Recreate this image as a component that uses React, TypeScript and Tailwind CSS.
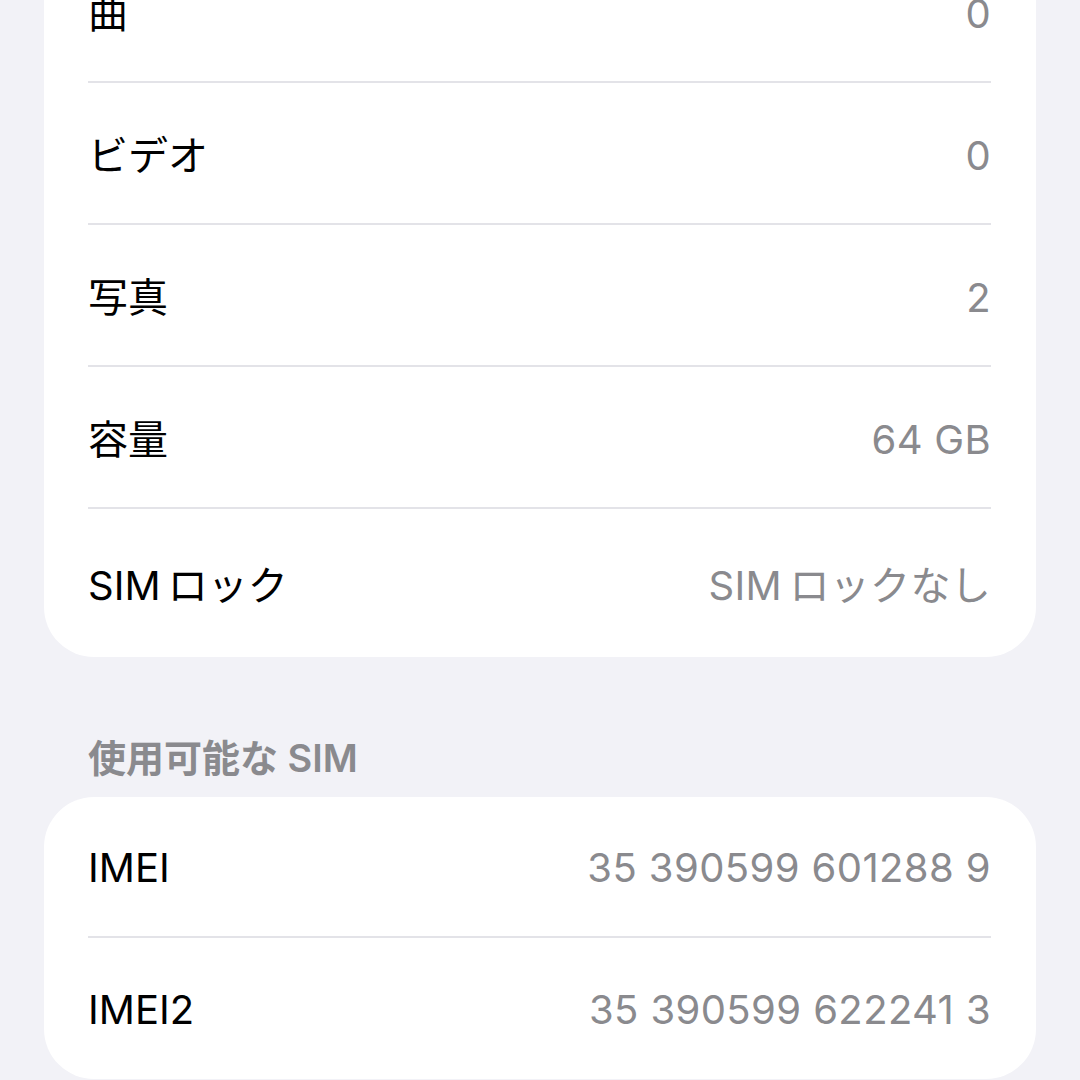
export default function App() {
  const rows1 = [
    { label: "曲", value: "0" },
    { label: "ビデオ", value: "0" },
    { label: "写真", value: "2" },
    { label: "容量", value: "64 GB" },
    { label: "SIM\u2009ロック", value: "SIM\u2009ロックなし" },
  ];
  const rows2 = [
    { label: "IMEI", value: "35 390599 601288 9" },
    { label: "IMEI2", value: "35 390599 622241 3" },
  ];

  return (
    <div
      className="w-[1080px] h-[1080px] overflow-hidden bg-[#f2f2f7] px-[44px]"
      style={{ fontFamily: 'Inter, "Noto Sans CJK JP", sans-serif' }}
    >
      <div className="-mt-[59px] bg-white rounded-b-[50px] pl-[44px]">
        {rows1.map((r, i) => (
          <div
            key={r.label}
            className={
              "flex items-center justify-between mr-[45px] pt-[5px] text-[40px] " +
              (i === rows1.length - 1 ? "h-[148px]" : "h-[142px] border-b-2 border-[#e3e3e8]")
            }
          >
            <span className="text-black">{r.label}</span>
            <span className="text-[#8a8a8e] tracking-[0.3px]">{r.value}</span>
          </div>
        ))}
      </div>

      <div className="pl-[44px] pt-[78px] pb-[16px] text-[38px] font-semibold text-[#8a8a8e] leading-[46px]">
        使用可能な SIM
      </div>

      <div className="bg-white rounded-[50px] pl-[44px]">
        {rows2.map((r, i) => (
          <div
            key={r.label}
            className={
              "flex items-center justify-between mr-[45px] pt-[3px] text-[40px] h-[141px] " +
              (i === 0 ? "border-b-2 border-[#e3e3e8]" : "")
            }
          >
            <span className="text-black">{r.label}</span>
            <span className="text-[#8a8a8e] tracking-[0.4px]">{r.value}</span>
          </div>
        ))}
      </div>
    </div>
  );
}
